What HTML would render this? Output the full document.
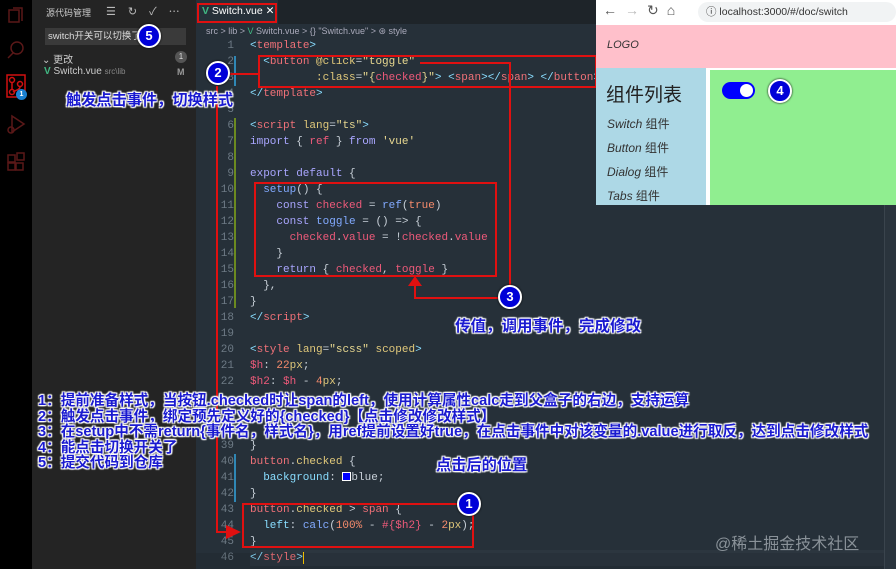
<!DOCTYPE html>
<html><head><meta charset="utf-8"><style>
*{margin:0;padding:0;box-sizing:border-box}
body{width:896px;height:569px;overflow:hidden;background:#263039;position:relative;font-family:"Liberation Sans","Noto Sans CJK SC",sans-serif}
.a{position:absolute}
.code{position:absolute;left:250px;font-family:"Liberation Mono","DejaVu Sans Mono",monospace;font-size:11px;line-height:16px;height:16px;white-space:pre;color:#c8d0d8}
.ln{position:absolute;left:200px;width:34px;text-align:right;font-family:"Liberation Mono",monospace;font-size:11px;line-height:16px;color:#6d7a85}
.t{color:#f07178}.p{color:#89ddff}.k{color:#a9a6ff}.s{color:#e8d890}.at{color:#e0c87a}.f{color:#82aaff}.r{color:#ee5a7a}.n{color:#f78c6c}
.rb{position:absolute;border:2px solid #e01010}
.rl{position:absolute;background:#e01010}
.badge{position:absolute;width:24px;height:24px;border-radius:50%;background:#0000d8;border:2px solid #fff;color:#fff;font:bold 13px/20px "Liberation Sans",sans-serif;text-align:center;box-shadow:0 0 2px #000}
.ann{position:absolute;color:#1a1ad0;font-weight:bold;font-size:14.6px;line-height:16px;white-space:nowrap;text-shadow:0 0 2px #fff,0 0 2px #fff,1px 1px 1px #fff,-1px -1px 1px #fff,1px -1px 1px #fff,-1px 1px 1px #fff}
</style></head><body>
<div class="a" style="left:0;top:0;width:32px;height:569px;background:#000"></div>
<svg class="a" style="left:0;top:0" width="32" height="180" fill="none" stroke="#5a1818" stroke-width="1.5">
<rect x="9" y="10" width="10" height="12"/><path d="M13 8h9v13"/>
<circle cx="17" cy="48" r="6"/><path d="M13 53l-5 5"/>
<path d="M7 75h18v22H7z" stroke="#d01010"/><circle cx="12" cy="80" r="2.5" stroke="#d01010"/><circle cx="20" cy="84" r="2.5" stroke="#d01010"/><circle cx="12" cy="92" r="2.5" stroke="#d01010"/><path d="M12 83v7M20 87c0 3-5 3-7 5" stroke="#d01010"/>
<path d="M12 116l12 8-12 8z"/><circle cx="11" cy="130" r="3"/>
<rect x="8" y="155" width="7" height="7"/><rect x="8" y="163" width="7" height="7"/><rect x="16" y="163" width="7" height="7"/><rect x="17" y="153" width="7" height="7"/>
</svg>
<div class="a" style="left:16px;top:89px;width:11px;height:11px;border-radius:50%;background:#1a80d0;color:#fff;font:bold 7px/11px sans-serif;text-align:center">1</div>
<div class="a" style="left:32px;top:0;width:164px;height:569px;background:#242424"></div>
<div class="a" style="left:46px;top:6px;font-size:9px;color:#ccc">源代码管理</div>
<div class="a" style="left:106px;top:3px;font-size:11px;color:#bbb;letter-spacing:12px">☰↻✓⋯</div>
<div class="a" style="left:45px;top:28px;width:141px;height:17px;background:#3a3a3a;color:#ddd;font-size:9.5px;line-height:17px;padding-left:3px">switch开关可以切换了</div>
<div class="a" style="left:42px;top:51px;font-size:10px;color:#ccc">⌄ 更改</div>
<div class="a" style="left:175px;top:51px;width:12px;height:12px;border-radius:50%;background:#555;color:#ddd;font-size:8px;line-height:12px;text-align:center">1</div>
<div class="a" style="left:44px;top:66px;font-size:10px;color:#ccc"><span style="color:#41b883;font-weight:bold">V</span> Switch.vue <span style="font-size:8px;color:#888">src\lib</span></div>
<div class="a" style="left:177px;top:67px;font-size:9px;color:#999;font-weight:bold">M</div>
<div class="a" style="left:196px;top:0;width:400px;height:24px;background:#1e2429"></div>
<div class="a" style="left:196px;top:0;width:82px;height:24px;background:#263039"></div>
<div class="a" style="left:202px;top:5px;font-size:10.5px;color:#fff"><span style="color:#41b883;font-weight:bold">V</span> Switch.vue ✕</div>
<div class="rb" style="left:197px;top:3px;width:80px;height:20px"></div>
<div class="a" style="left:206px;top:26px;font-size:9px;color:#aab">src &gt; lib &gt; <span style="color:#41b883">V</span> Switch.vue &gt; {} "Switch.vue" &gt; ⊛ style</div>
<div class="a" style="left:234px;top:56px;width:2px;height:30px;background:#2f87b5"></div>
<div class="a" style="left:234px;top:118px;width:2px;height:190px;background:#6b8a20"></div>
<div class="a" style="left:234px;top:454px;width:2px;height:48px;background:#2f87b5"></div>
<div class="ln" style="top:38px">1</div><div class="ln" style="top:54px">2</div><div class="ln" style="top:70px">3</div><div class="ln" style="top:86px">4</div><div class="ln" style="top:102px">5</div><div class="ln" style="top:118px">6</div><div class="ln" style="top:134px">7</div><div class="ln" style="top:150px">8</div><div class="ln" style="top:166px">9</div><div class="ln" style="top:182px">10</div><div class="ln" style="top:198px">11</div><div class="ln" style="top:214px">12</div><div class="ln" style="top:230px">13</div><div class="ln" style="top:246px">14</div><div class="ln" style="top:262px">15</div><div class="ln" style="top:278px">16</div><div class="ln" style="top:294px">17</div><div class="ln" style="top:310px">18</div><div class="ln" style="top:326px">19</div><div class="ln" style="top:342px">20</div><div class="ln" style="top:358px">21</div><div class="ln" style="top:374px">22</div><div class="ln" style="top:438px">39</div><div class="ln" style="top:454px">40</div><div class="ln" style="top:470px">41</div><div class="ln" style="top:486px">42</div><div class="ln" style="top:502px">43</div><div class="ln" style="top:518px">44</div><div class="ln" style="top:534px">45</div><div class="ln" style="top:550px">46</div>
<div class="code" style="top:38px"><span class="p">&lt;</span><span class="t">template</span><span class="p">&gt;</span></div>
<div class="code" style="top:54px">  <span class="p">&lt;</span><span class="t">button</span> <span class="at">@click</span>=<span class="s">"toggle"</span></div>
<div class="code" style="top:70px">          <span class="at">:class</span>=<span class="s">"{</span><span class="r">checked</span><span class="s">}"</span><span class="p">&gt;</span> <span class="p">&lt;</span><span class="t">span</span><span class="p">&gt;&lt;/</span><span class="t">span</span><span class="p">&gt;</span> <span class="p">&lt;/</span><span class="t">button</span><span class="p">&gt;</span></div>
<div class="code" style="top:86px"><span class="p">&lt;/</span><span class="t">template</span><span class="p">&gt;</span></div>
<div class="code" style="top:118px"><span class="p">&lt;</span><span class="t">script</span> <span class="at">lang</span>=<span class="s">"ts"</span><span class="p">&gt;</span></div>
<div class="code" style="top:134px"><span class="k">import</span> { <span class="r">ref</span> } <span class="k">from</span> <span class="s">'vue'</span></div>
<div class="code" style="top:166px"><span class="k">export default</span> {</div>
<div class="code" style="top:182px">  <span class="f">setup</span>() {</div>
<div class="code" style="top:198px">    <span class="k">const</span> <span class="r">checked</span> = <span class="f">ref</span>(<span class="n">true</span>)</div>
<div class="code" style="top:214px">    <span class="k">const</span> <span class="f">toggle</span> = () =&gt; {</div>
<div class="code" style="top:230px">      <span class="r">checked</span>.<span class="r">value</span> = !<span class="r">checked</span>.<span class="r">value</span></div>
<div class="code" style="top:246px">    }</div>
<div class="code" style="top:262px">    <span class="k">return</span> { <span class="r">checked</span>, <span class="r">toggle</span> }</div>
<div class="code" style="top:278px">  },</div>
<div class="code" style="top:294px">}</div>
<div class="code" style="top:310px"><span class="p">&lt;/</span><span class="t">script</span><span class="p">&gt;</span></div>
<div class="code" style="top:342px"><span class="p">&lt;</span><span class="t">style</span> <span class="at">lang</span>=<span class="s">"scss"</span> <span class="at">scoped</span><span class="p">&gt;</span></div>
<div class="code" style="top:358px"><span class="r">$h</span>: <span class="n">22</span><span class="at">px</span>;</div>
<div class="code" style="top:374px"><span class="r">$h2</span>: <span class="r">$h</span> - <span class="n">4</span><span class="at">px</span>;</div>
<div class="code" style="top:438px">}</div>
<div class="code" style="top:454px"><span class="t">button</span>.<span class="at">checked</span> {</div>
<div class="code" style="top:470px">  <span class="p">background</span>: <span style="display:inline-block;width:9px;height:9px;background:#00f;border:1px solid #fff;vertical-align:-1px"></span>blue;</div>
<div class="code" style="top:486px">}</div>
<div class="code" style="top:502px"><span class="t">button</span>.<span class="at">checked</span> &gt; <span class="t">span</span> {</div>
<div class="code" style="top:518px">  <span class="p">left</span>: <span class="f">calc</span>(<span class="n">100%</span> - <span class="r">#{$h2}</span> - <span class="n">2</span><span class="at">px</span>);</div>
<div class="code" style="top:534px">}</div>
<div class="code" style="top:550px;background:#2c363f;width:640px"><span class="p">&lt;/</span><span class="t">style</span><span class="p">&gt;</span><span style="border-left:1px solid #ffcc00"></span></div>
<div class="a" style="left:196px;top:553px;width:700px;height:16px;background:rgba(0,0,0,0.08)"></div>
<div class="a" style="left:884px;top:205px;width:12px;height:364px;background:#2a343d;border-left:1px solid #3a444d"></div>
<div class="rb" style="left:258px;top:55px;width:339px;height:33px"></div>
<div class="rb" style="left:254px;top:182px;width:243px;height:95px"></div>
<div class="rb" style="left:242px;top:503px;width:232px;height:45px"></div>
<div class="rl" style="left:230px;top:73px;width:28px;height:2px"></div>
<div class="rl" style="left:216px;top:86px;width:2px;height:446px"></div>
<div class="rl" style="left:216px;top:531px;width:12px;height:2px"></div>
<svg class="a" style="left:226px;top:525px" width="16" height="14"><path d="M0 0L15 7 0 14z" fill="#e01010"/></svg>
<div class="rl" style="left:420px;top:62px;width:91px;height:2px"></div>
<div class="rl" style="left:509px;top:62px;width:2px;height:236px"></div>
<div class="rl" style="left:414px;top:297px;width:96px;height:2px"></div>
<div class="rl" style="left:414px;top:283px;width:2px;height:15px"></div>
<svg class="a" style="left:408px;top:276px" width="14" height="10"><path d="M7 0L14 10H0z" fill="#e01010"/></svg>
<div class="badge" style="left:206px;top:61px">2</div>
<div class="badge" style="left:498px;top:285px">3</div>
<div class="badge" style="left:457px;top:492px">1</div>
<div class="badge" style="left:137px;top:24px">5</div>
<div class="ann" style="left:66px;top:93px;font-size:15.2px">触发点击事件，切换样式</div>
<div class="ann" style="left:455px;top:319px;font-size:15.5px">传值，调用事件，完成修改</div>
<div class="ann" style="left:436px;top:458px;font-size:15.2px">点击后的位置</div>
<div class="ann" style="left:38px;top:393px">1：提前准备样式，当按钮.checked时让span的left，使用计算属性calc走到父盒子的右边，支持运算</div>
<div class="ann" style="left:38px;top:409px">2：触发点击事件，绑定预先定义好的{checked}【点击修改修改样式】</div>
<div class="ann" style="left:38px;top:424px">3：在setup中不需return{事件名，样式名}，用ref提前设置好true，在点击事件中对该变量的.value进行取反，达到点击修改样式</div>
<div class="ann" style="left:38px;top:440px">4：能点击切换开关了</div>
<div class="ann" style="left:38px;top:455px">5：提交代码到仓库</div>
<div class="a" style="left:715px;top:530px;font-size:16px;color:#8a9299">@稀土掘金技术社区</div>
<div class="a" style="left:596px;top:0;width:300px;height:205px;background:#fff"></div>
<div class="a" style="left:603px;top:2px;font-size:14px;color:#555;letter-spacing:8px">←<span style="color:#bbb">→</span>↻⌂</div>
<div class="a" style="left:698px;top:2px;width:198px;height:20px;background:#f1f3f4;border-radius:10px;font-size:10.5px;line-height:20px;color:#333;padding-left:8px">ⓘ localhost:3000/#/doc/switch</div>
<div class="a" style="left:596px;top:25px;width:300px;height:43px;background:#ffc0cb"></div>
<div class="a" style="left:607px;top:39px;font-size:11px;font-style:italic;color:#333">LOGO</div>
<div class="a" style="left:596px;top:68px;width:110px;height:137px;background:#add8e6"></div>
<div class="a" style="left:710px;top:70px;width:186px;height:135px;background:#90ee90"></div>
<div class="a" style="left:606px;top:80px;font-size:19px;color:#222">组件列表</div>
<div class="a" style="left:607px;top:112px;font-size:12px;color:#333;line-height:24px"><i>Switch</i> 组件<br><i>Button</i> 组件<br><i>Dialog</i> 组件<br><i>Tabs</i> 组件</div>
<div class="a" style="left:722px;top:82px;width:33px;height:17px;border-radius:9px;background:#0000ff"></div>
<div class="a" style="left:740px;top:84px;width:13px;height:13px;border-radius:50%;background:#fff"></div>
<div class="badge" style="left:768px;top:79px">4</div>
</body></html>
